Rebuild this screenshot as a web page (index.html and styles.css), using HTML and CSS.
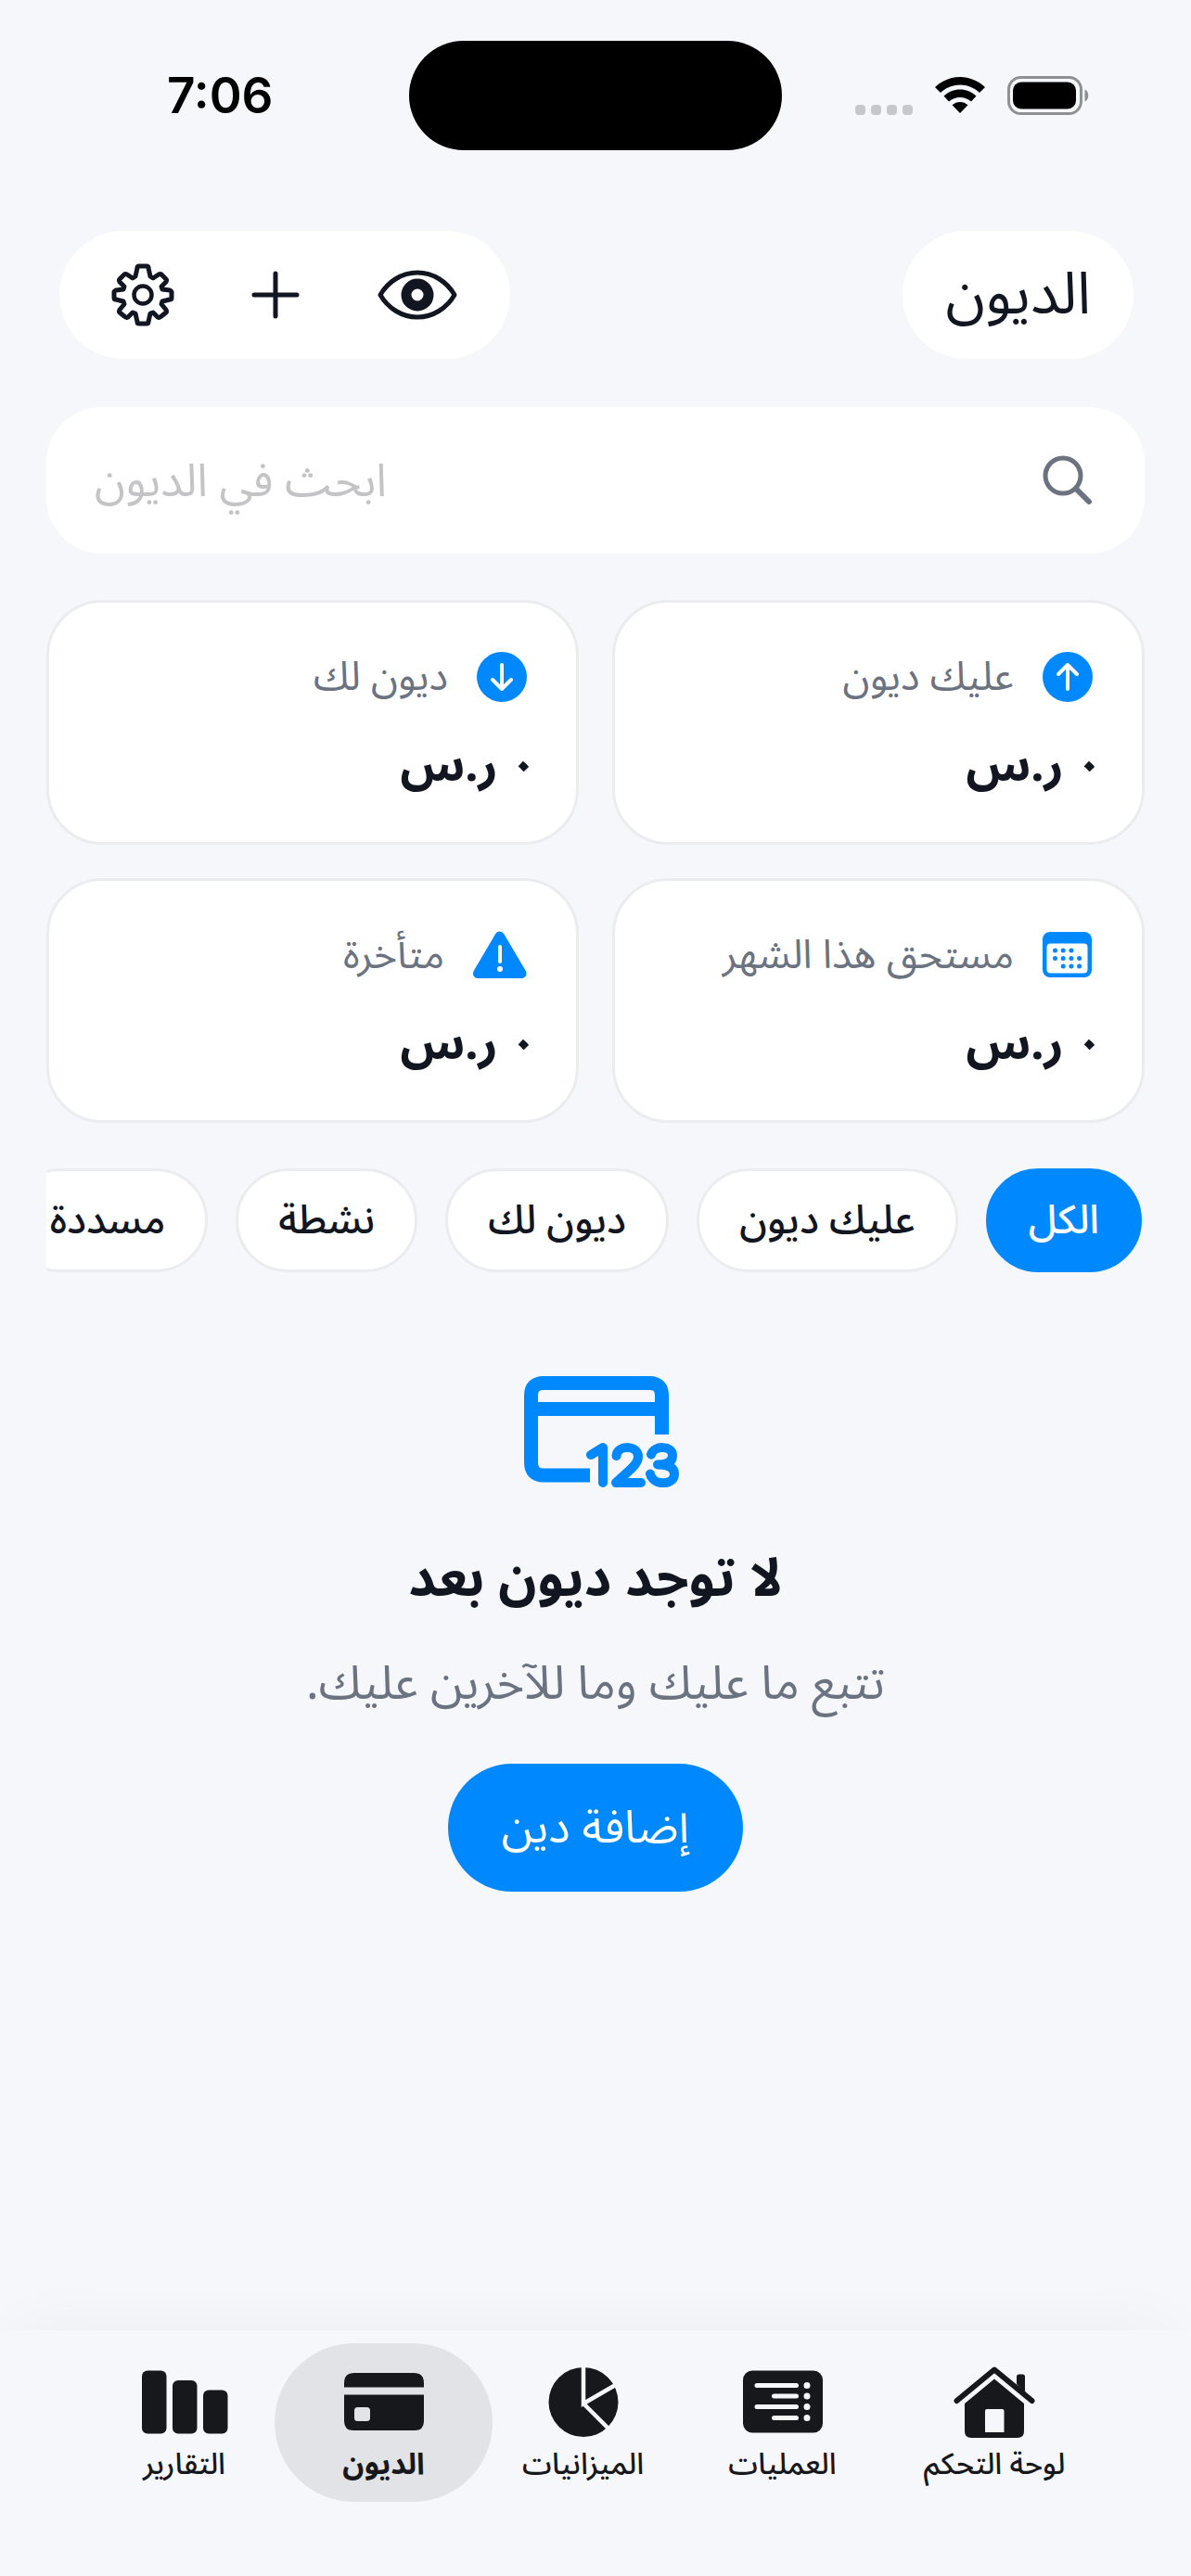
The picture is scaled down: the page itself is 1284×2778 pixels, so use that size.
FILE: index.html
```
<!DOCTYPE html>
<html lang="ar" dir="rtl">
<head>
    <meta charset="UTF-8">
    <meta name="viewport" content="width=device-width, initial-scale=1.0">
    <title>الديون</title>
    <link rel="stylesheet" href="styles.css">
</head>
<body>
    <div class="status-bar" dir="ltr">
        <span class="time">7:06</span>
        <div class="island"></div>
        <div class="indicators">
            <div class="dots"><i></i><i></i><i></i><i></i></div>
            <svg class="wifi" width="54" height="40" viewBox="0 0 54 40">
                <path d="M27 0C17 0 7.500 4 0 11l6 6c6-5.500 13-8.500 21-8.500S42 11.500 48 17l6-6C46.500 4 37 0 27 0z"/>
                <path d="M27 13.500c-6.500 0-12.500 2.500-17.500 7l5.500 6c3.500-3 7.500-4.500 12-4.500s8.500 1.500 12 4.500l5.500-6c-5-4.500-11-7-17.500-7z"/>
                <path d="M27 27c-3 0-6 1.200-8.500 3.300L27 39l8.500-8.700C33 28.200 30 27 27 27z"/>
            </svg>
            <svg class="battery" width="88" height="42" viewBox="0 0 88 42">
                <rect x="1.500" y="1.500" width="78" height="39" rx="13" fill="none" stroke="#8f9093" stroke-width="3"/>
                <rect x="6" y="6.500" width="68" height="29" rx="9"/>
                <path d="M83.500 14.500c5 2 5 11 0 13z" fill="#8f9093"/>
            </svg>
        </div>
    </div>

    <header class="top-bar">
        <h1 class="page-title">الديون</h1>
        <div class="actions">
            <button class="icon-button" aria-label="إظهار المبالغ">
                <svg width="88" height="56" viewBox="0 0 88 56">
                    <path d="M4 28C12 14 27 4 44 4s32 10 40 24C76 42 61 52 44 52S12 42 4 28z" fill="none" stroke="currentColor" stroke-width="5" stroke-linejoin="round"/>
                    <circle cx="44" cy="28" r="12" fill="none" stroke="currentColor" stroke-width="11"/>
                </svg>
            </button>
            <button class="icon-button" aria-label="إضافة">
                <svg width="52" height="52" viewBox="0 0 52 52">
                    <path d="M26 3v46M3 26h46" fill="none" stroke="currentColor" stroke-width="5" stroke-linecap="round"/>
                </svg>
            </button>
            <button class="icon-button" aria-label="الإعدادات">
                <svg width="68" height="68" viewBox="-34 -34 68 68">
                    <path fill="none" stroke="currentColor" stroke-width="5" stroke-linejoin="round" d="M-4-31H4Q6-31 6-29L8-20L11-18L17-22Q19-23 20-22L25-17Q26-16 25-14L20-9L21-6L29-5Q31-4 31-3V3Q31 5 29 5L21 7L20 10L25 16Q26 18 25 19L20 23Q18 25 16 24L11 19L8 20L6 29Q6 31 4 31H-4Q-6 31-6 29L-8 20L-11 19L-16 24Q-18 25-20 23L-25 19Q-26 18-25 16L-20 10L-21 7L-29 5Q-31 5-31 3V-3Q-31-4-29-5L-21-6L-20-9L-25-14Q-26-16-25-17L-20-22Q-19-23-17-22L-11-18L-8-20L-6-29Q-6-31-4-31z"/>
                    <circle r="9.500" fill="none" stroke="currentColor" stroke-width="4.500"/>
                </svg>
            </button>
        </div>
    </header>

    <main class="content">
        <label class="search">
            <svg width="54" height="54" viewBox="0 0 54 54">
                <circle cx="22" cy="22" r="19" fill="none" stroke="currentColor" stroke-width="5"/>
                <path d="M36 36l14 14" stroke="currentColor" stroke-width="6" stroke-linecap="round"/>
            </svg>
            <input class="search-input" type="text" placeholder="ابحث في الديون" aria-label="ابحث في الديون">
        </label>

        <section class="summary">
            <div class="card">
                <div class="card-head">
                    <svg width="56" height="56" viewBox="0 0 56 56">
                        <circle cx="28" cy="28" r="27"/>
                        <path class="mark" d="M28 41V16M18 25l10-10 10 10"/>
                    </svg>
                    <span>عليك ديون</span>
                </div>
                <div class="amount">٠ ر.س</div>
            </div>
            <div class="card">
                <div class="card-head">
                    <svg width="56" height="56" viewBox="0 0 56 56">
                        <circle cx="28" cy="28" r="27"/>
                        <path class="mark" d="M28 15v25M18 31l10 10 10-10"/>
                    </svg>
                    <span>ديون لك</span>
                </div>
                <div class="amount">٠ ر.س</div>
            </div>
            <div class="card">
                <div class="card-head">
                    <svg width="56" height="56" viewBox="0 0 56 56">
                        <rect x="1" y="3" width="53" height="49" rx="8"/>
                        <rect x="5.500" y="15.500" width="44" height="32" rx="4" fill="#fff"/>
                        <path class="days" d="M14.500 23h18M14.500 31.500h27M23.200 40h18"/>
                    </svg>
                    <span>مستحق هذا الشهر</span>
                </div>
                <div class="amount">٠ ر.س</div>
            </div>
            <div class="card">
                <div class="card-head">
                    <svg width="60" height="56" viewBox="0 0 60 56">
                        <path d="M25 5.500c2-4 7-4 9.500 0l23 39c2.500 4.500 0 8.500-5 8.500H7c-5 0-7.500-4-5-8.500z"/>
                        <path class="mark" d="M30 19v16"/>
                        <circle cx="30" cy="43" r="3" fill="#fff"/>
                    </svg>
                    <span>متأخرة</span>
                </div>
                <div class="amount">٠ ر.س</div>
            </div>
        </section>

        <div class="filters">
            <button class="chip selected">الكل</button>
            <button class="chip">عليك ديون</button>
            <button class="chip">ديون لك</button>
            <button class="chip">نشطة</button>
            <button class="chip">مسددة</button>
        </div>

        <section class="empty">
            <!-- card outline is drawn right of centre, the digits hang over its corner -->
            <svg class="empty-icon" width="182" height="120" viewBox="-14 0 182 120">
                <path d="M71 107H21Q7.500 107 7.500 93V21Q7.500 7.500 21 7.500H135Q148.500 7.500 148.500 21V63M8 35.500H148" fill="none" stroke="#0088ff" stroke-width="15"/>
                <path d="M72 85l13-8v38M99.500 86c1-12 23.500-12 23.500 1 0 8-9 14-24 28h27M137 84.500c3-10 23-10 23 1 0 7-6 10-16 10 12 0 18 3 18 10 0 13-23 13-26 0" fill="none" stroke="#0088ff" stroke-width="10" stroke-linecap="round" stroke-linejoin="round"/>
            </svg>
            <h2 class="empty-title">لا توجد ديون بعد</h2>
            <p class="empty-text">تتبع ما عليك وما للآخرين عليك.</p>
            <button class="add-button">إضافة دين</button>
        </section>
    </main>

    <nav class="tab-bar">
        <a class="tab tab-home" href="#">
            <svg width="96" height="80" viewBox="0 0 96 80">
                <path d="M7.500 38L48 4.500l40.500 33.500" fill="none" stroke="currentColor" stroke-width="6" stroke-linecap="round" stroke-linejoin="round"/>
                <path d="M72 20V12q0-2.500 2.500-2.500h4Q81 9.500 81 12v18z"/>
                <path fill-rule="evenodd" d="M48 14.500L80 41V71q0 7-7 7H23q-7 0-7-7V41zM40 47q-2 0-2 2V72H58.500V49q0-2-2-2z"/>
            </svg>
            <span>لوحة التحكم</span>
        </a>
        <a class="tab" href="#">
            <svg width="96" height="80" viewBox="0 0 96 80">
                <rect x="5" y="5.500" width="86" height="67" rx="10"/>
                <path d="M20 21.500H62.500M38.500 33H62.500M20 44.500H62.500M38.500 56.500H62.500" stroke="#f6f7fb" stroke-width="5" stroke-linecap="round"/>
                <path d="M74 21.500h.01M74 33h.01M74 44.500h.01M74 56.500h.01" stroke="#f6f7fb" stroke-width="7" stroke-linecap="round"/>
            </svg>
            <span>العمليات</span>
        </a>
        <a class="tab" href="#">
            <svg width="96" height="80" viewBox="0 0 96 80">
                <circle cx="48" cy="39.500" r="37.500"/>
                <path d="M48 0V41L86 19M48 41L78 71" fill="none" stroke="#f6f7fb" stroke-width="4.500"/>
            </svg>
            <span>الميزانيات</span>
        </a>
        <a class="tab active" href="#">
            <svg width="96" height="80" viewBox="0 0 96 80">
                <path d="M5 23.500V19Q5 8 16 8H80Q91 8 91 19V23.500z"/>
                <path fill-rule="evenodd" d="M5 31.500H91V60q0 10-10 10H15q-10 0-10-10zM19.500 45q-3.500 0-3.500 3.500v8q0 3.500 3.500 3.500h10q3.500 0 3.500-3.500v-8q0-3.500-3.500-3.500z"/>
            </svg>
            <span>الديون</span>
        </a>
        <a class="tab" href="#">
            <svg width="96" height="80" viewBox="0 0 96 80">
                <rect x="2" y="5.500" width="26.500" height="68" rx="6"/>
                <rect x="35" y="16" width="26.500" height="57.500" rx="6"/>
                <rect x="68" y="26.500" width="26.500" height="47" rx="6"/>
            </svg>
            <span>التقارير</span>
        </a>
    </nav>
</body>
</html>
```
FILE: styles.css
```
* {
    box-sizing: border-box;
}

body {
    margin: 0;
    min-height: 100vh;
    display: flex;
    flex-direction: column;
    background: #f6f7fb;
    color: #111620;
    font-family: "Noto Sans", "Noto Sans Arabic", sans-serif;
    overflow-x: hidden;
}

button {
    border: none;
    padding: 0;
    background: none;
    color: inherit;
    font-family: inherit;
    cursor: pointer;
}

svg {
    display: block;
    flex: none;
    fill: currentColor;
}

/* status bar */
.status-bar {
    display: grid;
    grid-template-columns: 1fr 402px 1fr;
    align-items: center;
    padding: 44px 0;
    color: #000;
}

.time {
    padding-left: 180px;
    font: 600 53px/60px Inter, sans-serif;
}

.island {
    height: 118px;
    border-radius: 59px;
    background: #000;
}

.indicators {
    display: flex;
    justify-content: flex-end;
    align-items: center;
    gap: 24px;
    padding-right: 110px;
}

.dots {
    display: flex;
    align-self: flex-end;
    gap: 6px;
}

.dots i {
    width: 11px;
    height: 11px;
    border-radius: 4px;
    background: #c6c7ca;
}

/* header */
.top-bar {
    display: flex;
    justify-content: space-between;
    align-items: center;
    padding: 43px 62px 0 64px;
}

.page-title {
    margin: 0;
    padding: 0 46px 8px;
    border-radius: 70px;
    background: #fff;
    font-size: 63px;
    font-weight: 400;
    line-height: 130px;
}

.actions {
    display: flex;
    align-items: center;
    gap: 83px;
    height: 138px;
    padding: 0 56px;
    border-radius: 70px;
    background: #fff;
}

.content {
    display: flex;
    flex-direction: column;
    padding: 52px 50px 0;
}

.search {
    display: flex;
    align-items: center;
    gap: 40px;
    height: 158px;
    padding: 0 56px 0 52px;
    border-radius: 60px;
    background: #fff;
    color: #6b7280;
}

.search-input {
    flex: 1;
    min-width: 0;
    height: 120px;
    padding: 0 0 4px;
    border: none;
    outline: none;
    background: none;
    font-family: inherit;
    font-size: 49px;
    line-height: 110px;
    text-align: left;
}

.search-input::placeholder {
    color: #c4c4c6;
    opacity: 1;
}

/* summary cards */
.summary {
    display: grid;
    grid-template-columns: 1fr 1fr;
    gap: 36px;
    margin-top: 50px;
}

.card {
    height: 264px;
    padding: 52px 52px 0;
    border: 3px solid #ebecef;
    border-radius: 60px;
    background: #fff;
}

.card-head {
    display: flex;
    align-items: center;
    gap: 30px;
    height: 56px;
    color: #6b7280;
    font-size: 43px;
}

.card-head svg {
    fill: #0088ff;
}

.card-head .mark {
    fill: none;
    stroke: #fff;
    stroke-width: 4;
    stroke-linecap: round;
    stroke-linejoin: round;
}

.card-head .days {
    stroke: #0088ff;
    stroke-width: 5;
    stroke-linecap: round;
    stroke-dasharray: 0 8.7;
}

.amount {
    margin: 28px -10px 0 0;
    font-size: 51px;
    font-weight: 700;
    line-height: 72px;
}

/* filter chips */
.filters {
    display: flex;
    gap: 30px;
    margin-top: 49px;
    padding-right: 3px;
    overflow: hidden;
}

.chip {
    flex: none;
    height: 112px;
    padding: 0 43px;
    border: 3px solid #ebecef;
    border-radius: 56px;
    background: #fff;
    font-size: 43px;
    font-weight: 500;
}

.chip.selected {
    border-color: #0088ff;
    background: #0088ff;
    color: #fff;
}

/* empty state */
.empty {
    display: flex;
    flex-direction: column;
    align-items: center;
    padding-top: 112px;
}

.empty-title {
    margin: 50px 0 0;
    font-size: 57px;
    font-weight: 700;
    line-height: 90px;
}

.empty-text {
    margin: 28px 0 0;
    color: #6b7280;
    font-size: 51px;
    line-height: 80px;
}

.add-button {
    height: 138px;
    margin-top: 50px;
    padding: 0 58px;
    border-radius: 69px;
    background: #0088ff;
    color: #fff;
    font-size: 49px;
}

/* bottom tabs */
.tab-bar {
    display: flex;
    margin-top: auto;
    height: 265px;
    padding: 14px 91px 0;
    background: #f6f7fb;
    box-shadow: 0 -10px 80px -20px rgba(0, 0, 0, 0.06);
}

.tab {
    flex: 215;
    display: flex;
    flex-direction: column;
    align-items: center;
    gap: 3px;
    height: 171px;
    padding-top: 24px;
    border-radius: 86px;
    color: #17181c;
    font-size: 32px;
    font-weight: 500;
    line-height: 44px;
    text-decoration: none;
}

.tab-home {
    flex: 242;
}

.tab.active {
    flex: 235;
    margin: 0 -10px;
    background: #e2e3e7;
    font-weight: 700;
}
```
